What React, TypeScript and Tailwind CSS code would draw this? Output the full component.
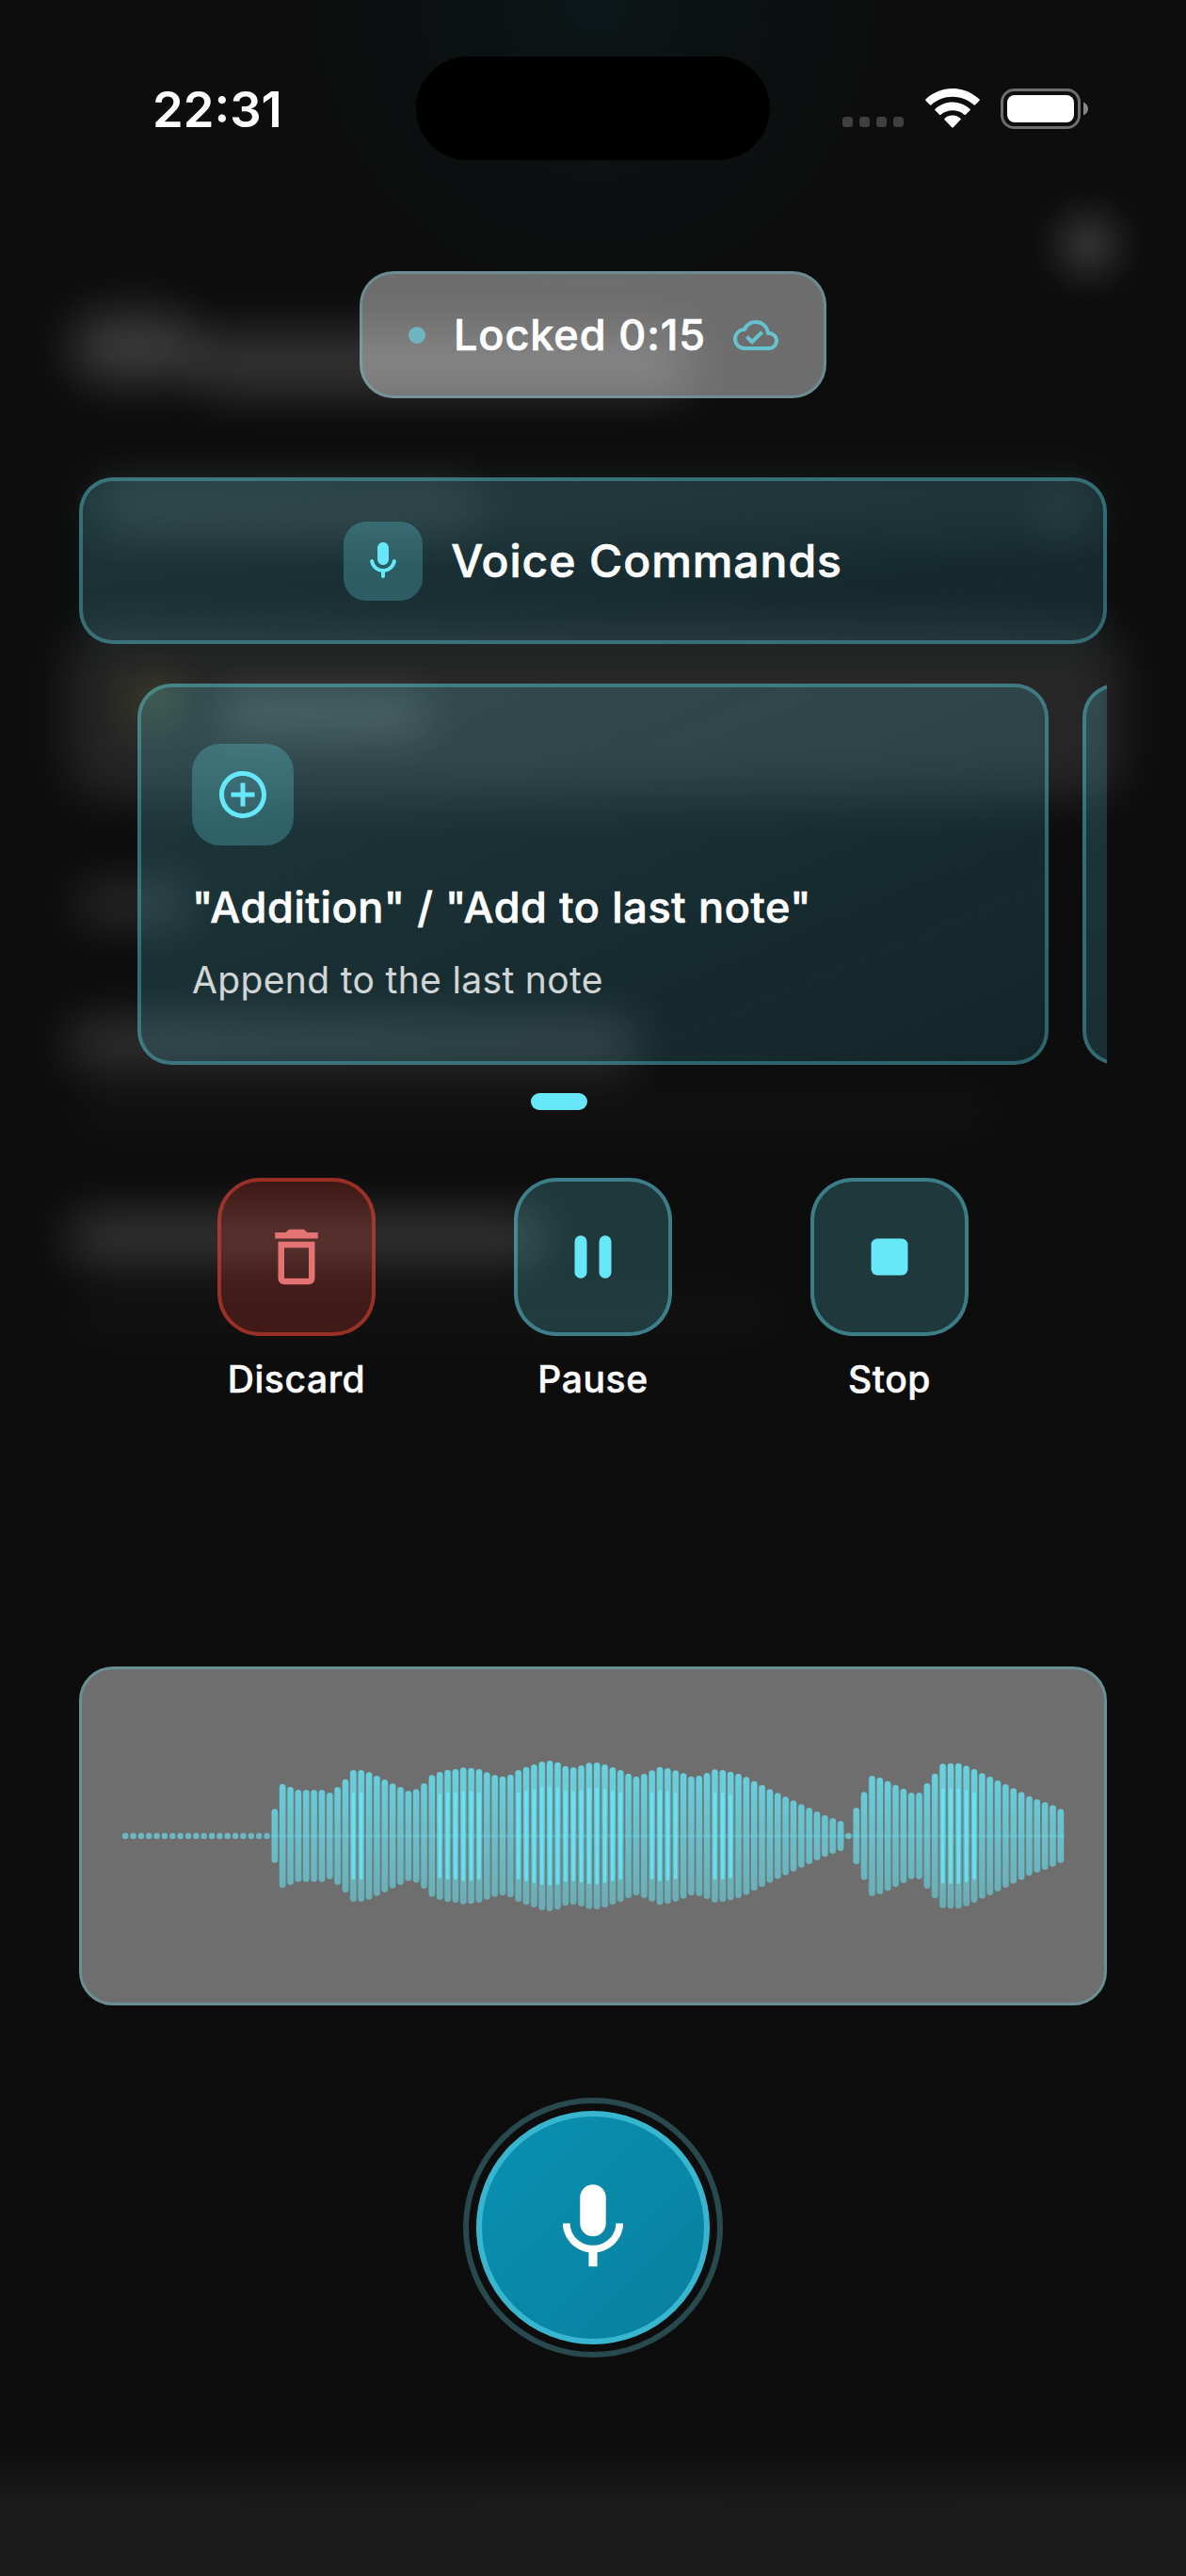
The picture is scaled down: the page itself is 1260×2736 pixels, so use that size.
import type { ReactNode } from "react";
import { MdAddCircleOutline, MdMic, MdOutlineCloudDone } from "react-icons/md";

// Half-heights of the bars from the first audible sample on; 0 is silence.
const SILENT_LEAD = 19;
const LEVELS = [
  28.7, 55.3, 52.3, 49, 49, 49, 49, 46, 52, 60.3, 70, 70, 67.7, 64, 60, 55.7, 52, 48, 49.7, 56,
  64.7, 68, 70.3, 71, 72.7, 72.3, 71, 67.7, 64.7, 63.3, 65.3, 70, 73.3, 76, 79, 80, 78.3, 74.3, 73,
  75, 77.7, 78, 76, 73, 70, 66.3, 63.3, 66, 69.7, 73.3, 72, 69.7, 66.7, 63.3, 64, 67, 70.7, 70,
  68.3, 66, 62.7, 58.3, 54.3, 49.7, 45.7, 41.7, 37.7, 33.7, 30, 26, 22.3, 19, 16, 0, 30, 46.7, 64,
  62, 58.3, 54.3, 50.3, 46, 46, 56, 66.3, 76.7, 77.3, 77.3, 74.7, 71, 66.7, 63, 59, 55, 50.7, 46.7,
  42.3, 39, 36, 32.7, 28.7,
];
const BARS = [...Array(SILENT_LEAD).fill(0), ...LEVELS] as number[];
const PITCH = 8.35;
const MID = 120;

function Waveform() {
  return (
    <svg width="1002" height="240" viewBox="0 0 1002 240">
      <defs>
        <linearGradient id="bar" gradientUnits="userSpaceOnUse" x1="0" y1="40" x2="0" y2="200">
          <stop offset="0" stopColor="#67e8f9" stopOpacity="0.8" />
          <stop offset="1" stopColor="#67e8f9" stopOpacity="0.42" />
        </linearGradient>
      </defs>
      {BARS.map((half, i) => {
        const x = 4.2 + PITCH * i;
        const h = Math.max(half, 3.3);
        return (
          <g key={i}>
            {half > 0 && (
              <rect x={x - 4.1} y={MID - h + 0.5} width="8.2" height={h * 2 - 1} rx="4" fill="#67e8f9" opacity="0.14" />
            )}
            <rect x={x - 3.2} y={MID - h} width="6.4" height={h * 2} rx="3.2" fill="url(#bar)" />
            {half >= 68 && (
              <rect x={x - 1.8} y={MID - half * 0.66} width="3.6" height={half * 1.32} rx="1.8" fill="#67e8f9" opacity="0.85" />
            )}
          </g>
        );
      })}
      <rect x={PITCH * SILENT_LEAD} y={MID - 1.5} width={1002 - PITCH * SILENT_LEAD} height="3" fill="#67e8f9" opacity="0.25" />
    </svg>
  );
}

function Backdrop() {
  return (
    <div className="absolute inset-0 overflow-hidden bg-[#0d0d0d]">
      <div className="absolute left-[310px] -top-[330px] h-[660px] w-[640px] rounded-full bg-[radial-gradient(closest-side,#0c1618,#0c1011_60%,transparent)]" />
      <div className="absolute left-[1128px] top-[232px] h-[56px] w-[56px] rounded-full bg-white/23 blur-[22px]" />
      <div className="absolute left-[76px] top-[334px] h-[70px] w-[135px] rounded-full bg-white/20 blur-[25px]" />
      <div className="absolute left-[200px] top-[354px] h-[64px] w-[535px] rounded-full bg-white/17 blur-[25px]" />
      <div className="absolute left-[80px] top-[500px] h-[70px] w-[1100px] rounded-[40px] bg-white/4 blur-[28px]" />
      <div className="absolute left-[75px] top-[668px] h-[177px] w-[1115px] rounded-[30px] bg-white/11 blur-[26px]" />
      <div className="absolute left-[110px] top-[512px] h-[54px] w-[400px] rounded-full bg-white/9 blur-[26px]" />
      <div className="absolute left-[1100px] top-[515px] h-[60px] w-[60px] rounded-full bg-white/6 blur-[24px]" />
      <div className="absolute left-[142px] top-[722px] h-[46px] w-[46px] rounded-full bg-[#7a8a2a]/32 blur-[20px]" />
      <div className="absolute left-[235px] top-[738px] h-[42px] w-[220px] rounded-full bg-white/15 blur-[22px]" />
      <div className="absolute left-[80px] top-[938px] h-[44px] w-[120px] rounded-full bg-white/12 blur-[24px]" />
      <div className="absolute left-[72px] top-[1084px] h-[50px] w-[606px] rounded-full bg-white/16 blur-[25px]" />
      <div className="absolute left-[75px] top-[1160px] h-[40px] w-[980px] rounded-full bg-white/3 blur-[24px]" />
      <div className="absolute left-[72px] top-[1290px] h-[50px] w-[506px] rounded-full bg-white/18 blur-[25px]" />
      <div className="absolute left-[75px] top-[1376px] h-[40px] w-[750px] rounded-full bg-white/3 blur-[24px]" />
      <div className="absolute inset-x-0 bottom-0 h-[140px] bg-linear-to-b from-[#0d0d0d] to-[#1b1b1b] to-50%" />
    </div>
  );
}

function StatusBar() {
  return (
    <header className="flex h-[288px] items-start pt-[60px]">
      <div className="flex h-[112px] w-[442px] items-center pl-[162px] text-[52.5px] font-semibold">22:31</div>
      <div className="h-[110px] w-[376px] rounded-full bg-black" />
      <div className="flex h-[110px] items-center pl-[77px]">
        <div className="flex gap-[7px] pt-[29px]">
          {[0, 1, 2, 3].map((i) => (
            <span key={i} className="h-[11px] w-[11px] rounded-[3.5px] bg-[#3f3f3f]" />
          ))}
        </div>
        <svg className="ml-[23px]" width="58" height="42" viewBox="0 0 58 42" fill="#fff">
          <path d="M29 0C40 0 50 4.300 57.400 11.300Q58.200 12.200 57.400 13L53.200 17.300Q52.400 18 51.500 17.300C45.500 11.900 37.600 8.800 29 8.800S12.500 11.900 6.500 17.300Q5.600 18 4.800 17.300L.6 13Q-.2 12.200 .6 11.300C8 4.300 18 0 29 0Z" />
          <path d="M29 14.500C36 14.500 42.500 17.200 47.400 21.700Q48.200 22.500 47.400 23.300L43 27.700Q42.200 28.400 41.300 27.700C38 24.900 33.700 23.200 29 23.200S20 24.900 16.700 27.700Q15.800 28.400 15 27.700L10.600 23.300Q9.800 22.500 10.600 21.700C15.500 17.200 22 14.500 29 14.500Z" />
          <path d="M29 28.600C32.200 28.600 35.100 29.800 37.400 31.700Q38.200 32.500 37.400 33.300L29.800 41.200Q29 42 28.200 41.200L20.600 33.300Q19.800 32.500 20.600 31.700C22.900 29.800 25.800 28.600 29 28.600Z" />
        </svg>
        <svg className="ml-[22px]" width="94" height="43" viewBox="0 0 94 43">
          <rect x="1.500" y="1.500" width="82" height="40" rx="13" fill="none" stroke="#6e6e6e" strokeWidth="3" />
          <rect x="7" y="7" width="71" height="29" rx="8" fill="#fff" />
          <path d="M88 14.500C91 15.700 93 18.400 93 21.500S91 27.300 88 28.500Z" fill="#868686" />
        </svg>
      </div>
    </header>
  );
}

function MicRounded({ size }: { size: number }) {
  return (
    <svg width={size} height={size} viewBox="0 0 24 24" fill="currentColor">
      <path d="M12 14c1.660 0 3-1.340 3-3V5c0-1.660-1.340-3-3-3S9 3.340 9 5v6c0 1.660 1.340 3 3 3zm5.910-3c-.49 0-.9.360-.98.850C16.520 14.200 14.470 16 12 16s-4.520-1.800-4.930-4.150c-.08-.49-.49-.85-.98-.85-.61 0-1.090.540-1 1.140.490 3 2.890 5.350 5.910 5.780V20c0 .550.450 1 1 1s1-.45 1-1v-2.080c3.020-.43 5.420-2.780 5.910-5.780.1-.6-.39-1.140-1-1.140z" />
    </svg>
  );
}

const teal = "border-[#67e8f9]/40 bg-[#67e8f9]/20 text-[#67e8f9]";
const red = "border-[#f44336]/50 bg-[#f44336]/21 text-[#e57373]";

// Sits between the medium and semibold cuts of the typeface.
const sturdy = "font-medium [-webkit-text-stroke:0.7px_white]";

function Action({ label, tone, children }: { label: string; tone: string; children: ReactNode }) {
  return (
    <div className="flex w-[168px] flex-col items-center">
      <button className={`flex h-[168px] w-[168px] items-center justify-center rounded-[45px] border-[4px] ${tone}`}>
        <svg width="78" height="78" viewBox="0 0 24 24" fill="currentColor">
          {children}
        </svg>
      </button>
      <span className="mt-[22px] text-[39px] leading-[48px] font-medium tracking-[0.6px] [-webkit-text-stroke:0.5px_white]">
        {label}
      </span>
    </div>
  );
}

const glass =
  "border-[4px] border-[#67e8f9]/32 bg-linear-to-br from-[#67e8f9]/20 to-[#3bbad8]/14 bg-origin-border rounded-[36px]";

export default function App() {
  return (
    <div className="relative h-[2736px] w-[1260px] overflow-hidden font-['Inter',sans-serif] text-white">
      <Backdrop />
      <div className="relative flex flex-col">
        <StatusBar />

        <div className="flex h-[135px] w-[496px] items-center self-center rounded-[36px] border-[3px] border-[#67e8f9]/26 bg-white/40 bg-origin-border pl-[49px]">
          <span className="h-[18px] w-[18px] rounded-full bg-[#6fb5bf]" />
          <span className={`ml-[30px] w-[297px] text-[45px] tracking-[0.9px] whitespace-nowrap ${sturdy}`}>
            Locked 0:15
          </span>
          <MdOutlineCloudDone size={48} className="text-[#66c4d1]" />
        </div>

        <main className="px-[84px]">
          <button
            className={`mt-[84px] flex h-[177px] w-full items-center justify-center gap-[30px] shadow-[0_6px_36px_rgba(103,232,249,0.04)] ${glass}`}
          >
            <span className="flex h-[84px] w-[84px] items-center justify-center rounded-[24px] bg-[#67e8f9]/25 text-[#67e8f9]">
              <MicRounded size={48} />
            </span>
            <span className={`pt-px text-[48px] tracking-[0.95px] ${sturdy}`}>Voice Commands</span>
          </button>

          <section className="mt-[42px] flex h-[405px] gap-[36px] overflow-hidden pl-[62px]">
            <article className={`w-[968px] shrink-0 pt-[60px] pl-[54px] ${glass}`}>
              <div className="flex h-[108px] w-[108px] items-center justify-center rounded-[30px] bg-[#67e8f9]/25 text-[#67e8f9]">
                <MdAddCircleOutline size={60} />
              </div>
              <h2 className={`mt-[39px] text-[45px] leading-[54px] tracking-[0.65px] whitespace-nowrap ${sturdy}`}>
                "Addition" / "Add to last note"
              </h2>
              <p className="mt-[23px] text-[39px] leading-[54px] tracking-[0.35px] text-white/80">
                Append to the last note
              </p>
            </article>
            <article className={`w-[968px] shrink-0 ${glass}`} />
          </section>

          <div className="mt-[30px] flex justify-center pr-[72px]">
            <span className="h-[18px] w-[60px] rounded-full bg-[#67e8f9]" />
          </div>

          <div className="mt-[72px] flex justify-evenly">
            <Action label="Discard" tone={red}>
              <path d="M6 19c0 1.100.9 2 2 2h8c1.100 0 2-.9 2-2V7H6v12zM8 9h8v10H8V9zm7.500-5l-.71-.71c-.18-.18-.44-.29-.7-.29H9.910c-.26 0-.52.110-.7.290L8.500 4H5v2h14V4h-3.500z" />
            </Action>
            <Action label="Pause" tone={teal}>
              <rect x="6" y="5" width="4" height="14" rx="2" />
              <rect x="14" y="5" width="4" height="14" rx="2" />
            </Action>
            <Action label="Stop" tone={teal}>
              <rect x="6" y="6" width="12" height="12" rx="2" />
            </Action>
          </div>

          <section className="mt-[281px] flex h-[360px] items-center justify-center rounded-[36px] border-[3px] border-[#6c8f94] bg-[#6e6e6e]">
            <Waveform />
          </section>
        </main>

        <div className="mt-[98px] flex h-[276px] w-[276px] items-center justify-center self-center rounded-full border-[6px] border-[#28494e]">
          <button className="flex h-[248px] w-[248px] items-center justify-center rounded-full border-[6px] border-[#38b6cf] bg-linear-to-br from-[#0891b2] to-[#0b7f9e]">
            <MdMic size={110} />
          </button>
        </div>
      </div>
    </div>
  );
}
